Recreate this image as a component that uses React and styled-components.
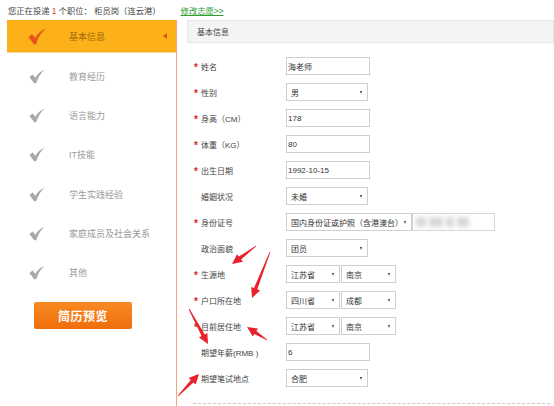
import React from "react";
import styled, { createGlobalStyle } from "styled-components";

const GlobalStyle = createGlobalStyle`
  html, body {
    margin: 0;
    padding: 0;
    background: #fff;
  }
  body {
    font-family: "Liberation Sans", "Noto Sans CJK SC", sans-serif;
    color: #333;
  }
`;

const navItems = [
  "教育经历",
  "语言能力",
  "IT技能",
  "学生实践经验",
  "家庭成员及社会关系",
  "其他",
];

const rows = [
  { label: "姓名", req: true, kind: "input", value: "海老师" },
  { label: "性别", req: true, kind: "select", value: "男" },
  { label: "身高（CM）", req: true, kind: "input", value: "178" },
  { label: "体重（KG）", req: true, kind: "input", value: "80" },
  { label: "出生日期", req: true, kind: "input", value: "1992-10-15" },
  { label: "婚姻状况", req: false, kind: "select", value: "未婚" },
  { label: "身份证号", req: true, kind: "id" },
  { label: "政治面貌", req: false, kind: "select", value: "团员" },
  { label: "生源地", req: true, kind: "region", value: ["江苏省", "南京"] },
  { label: "户口所在地", req: true, kind: "region", value: ["四川省", "成都"] },
  { label: "目前居住地", req: true, kind: "region", value: ["江苏省", "南京"] },
  { label: "期望年薪(RMB )", req: false, kind: "input", value: "6" },
  { label: "期望笔试地点", req: true, kind: "select", value: "合肥" },
];

const arrows = [
  [256, 246, 232, 264],
  [270, 252, 252, 298],
  [189, 309, 208, 344],
  [267, 340, 247, 327],
  [178, 396, 199, 374],
];

function arrowPoints([x1, y1, x2, y2]) {
  const len = Math.hypot(x2 - x1, y2 - y1);
  const dx = (x2 - x1) / len;
  const dy = (y2 - y1) / len;
  const nx = -dy;
  const ny = dx;
  const bx = x2 - dx * 10;
  const by = y2 - dy * 10;
  const p = (x, y, w) => `${(x + nx * w).toFixed(1)},${(y + ny * w).toFixed(1)}`;
  return [
    p(x1, y1, 0.4),
    p(bx, by, 1.8),
    p(bx, by, 4.8),
    `${x2},${y2}`,
    p(bx, by, -4.8),
    p(bx, by, -1.8),
    p(x1, y1, -0.4),
  ].join(" ");
}

function Check({ active }) {
  return (
    <CheckIcon viewBox="0 0 20 18" $active={active}>
      <path d="M0.5 9.5 L4.5 6.5 L8 10.5 C10.5 6 14 2.5 19.5 0.5 C15 4.5 11.5 9.5 9 17.5 L6.5 17.5 Z" />
    </CheckIcon>
  );
}

function Field({ row }) {
  if (row.kind === "input") return <TextBox>{row.value}</TextBox>;
  if (row.kind === "select") return <SelectBox $w={82}>{row.value}</SelectBox>;
  if (row.kind === "region")
    return (
      <Pair>
        <SelectBox $w={54}>{row.value[0]}</SelectBox>
        <SelectBox $w={55}>{row.value[1]}</SelectBox>
      </Pair>
    );
  return (
    <Pair $gap={0}>
      <SelectBox $w={126}>国内身份证或护照（含港澳台）</SelectBox>
      <Blurred>
        <Blob $w={10} />
        <Blob $w={14} />
        <Blob $w={8} />
        <Blob $w={12} />
      </Blurred>
    </Pair>
  );
}

export default function App() {
  return (
    <Page>
      <GlobalStyle />
      <TopLine>
        <span>
          您正在投递 <em>1</em> 个职位： 柜员岗（连云港）
        </span>
        <EditLink>修改志愿&gt;&gt;</EditLink>
      </TopLine>
      <Body>
        <Sidebar>
          <ActiveTab>
            <Check active />
            <TabText>基本信息</TabText>
            <Pointer />
          </ActiveTab>
          <NavList>
            {navItems.map((t) => (
              <NavItem key={t}>
                <Check />
                <NavText>{t}</NavText>
              </NavItem>
            ))}
          </NavList>
          <PreviewButton>简历预览</PreviewButton>
        </Sidebar>
        <Panel>
          <PanelHead>基本信息</PanelHead>
          <Form>
            {rows.map((r) => (
              <Row key={r.label}>
                <Label>
                  <Star>{r.req ? "*" : ""}</Star>
                  {r.label}
                </Label>
                <Field row={r} />
              </Row>
            ))}
          </Form>
          <Dashed />
        </Panel>
      </Body>
      <Overlay width="554" height="406">
        {arrows.map((a, i) => (
          <polygon key={i} points={arrowPoints(a)} fill="#e8232b" />
        ))}
      </Overlay>
    </Page>
  );
}

const Page = styled.div`
  position: relative;
  width: 554px;
  height: 406px;
  overflow: hidden;
`;

const TopLine = styled.div`
  height: 20px;
  padding-left: 8px;
  display: flex;
  align-items: center;
  font-size: 8.3px;
  color: #444;

  em {
    font-style: normal;
    color: #e03a2a;
  }
`;

const EditLink = styled.a`
  margin-left: 20px;
  color: #2f9e2f;
  text-decoration: underline;
`;

const Body = styled.div`
  display: flex;
  align-items: flex-start;
  padding-left: 7px;
`;

const Sidebar = styled.div`
  width: 169px;
  height: 386px;
  border-right: 1px solid #f0a67e;
  display: flex;
  flex-direction: column;
`;

const ActiveTab = styled.div`
  height: 32px;
  background: #fbb117;
  border-bottom: 1px solid #fcd49a;
  display: flex;
  align-items: center;
  padding-left: 21px;
  position: relative;
`;

const CheckIcon = styled.svg`
  width: ${(p) => (p.$active ? 18 : 16)}px;
  height: ${(p) => (p.$active ? 17 : 15)}px;
  fill: ${(p) => (p.$active ? "#e8541d" : "#a9a9a9")};
  flex-shrink: 0;
`;

const TabText = styled.span`
  margin-left: 23px;
  font-size: 9px;
  color: #9c6a0c;
`;

const Pointer = styled.span`
  position: absolute;
  right: 9px;
  top: 13px;
  border-top: 3.5px solid transparent;
  border-bottom: 3.5px solid transparent;
  border-right: 4px solid #d8570f;
`;

const NavList = styled.div`
  padding-top: 4px;
  display: flex;
  flex-direction: column;
`;

const NavItem = styled.div`
  height: 39.2px;
  display: flex;
  align-items: center;
  padding-left: 22px;
`;

const NavText = styled.span`
  margin-left: 24px;
  font-size: 9px;
  color: #9a9a9a;
`;

const PreviewButton = styled.div`
  margin: 10px 0 0 27px;
  width: 98px;
  height: 27px;
  background: linear-gradient(#f98a22, #ef6e0c);
  border-radius: 2px;
  color: #fff;
  font-size: 12px;
  font-weight: bold;
  display: flex;
  align-items: center;
  justify-content: center;
  letter-spacing: 0.5px;
`;

const Panel = styled.div`
  flex: 1;
  margin-left: 10px;
`;

const PanelHead = styled.div`
  height: 21px;
  border: 1px solid #e6e6e6;
  background: #f4f4f4;
  font-size: 8px;
  color: #444;
  display: flex;
  align-items: center;
  padding-left: 9px;
`;

const Form = styled.div`
  padding: 10px 0 0 7px;
`;

const Row = styled.div`
  height: 26px;
  display: flex;
  align-items: center;
`;

const Label = styled.div`
  width: 92px;
  display: flex;
  align-items: center;
  font-size: 8px;
  color: #444;
`;

const Star = styled.span`
  width: 7px;
  color: #d9262b;
  font-size: 10px;
  font-weight: bold;
  line-height: 8px;
  padding-top: 3px;
`;

const TextBox = styled.div`
  width: 81px;
  height: 16px;
  border: 1px solid #cfcfcf;
  font-size: 8px;
  color: #333;
  display: flex;
  align-items: center;
  padding-left: 1px;
  box-sizing: content-box;
`;

const SelectBox = styled.div`
  width: ${(p) => p.$w}px;
  height: 18px;
  box-sizing: border-box;
  border: 1px solid #cfcfcf;
  font-size: 8px;
  color: #333;
  display: flex;
  align-items: center;
  padding-left: 4px;
  position: relative;
  white-space: nowrap;

  &::after {
    content: "";
    position: absolute;
    right: 5px;
    top: 7px;
    border-left: 1.5px solid transparent;
    border-right: 1.5px solid transparent;
    border-top: 3px solid #333;
  }
`;

const Pair = styled.div`
  display: flex;
  gap: ${(p) => (p.$gap ?? 1)}px;
`;

const Blurred = styled.div`
  width: 83px;
  height: 18px;
  box-sizing: border-box;
  border: 1px solid #d6d6d6;
  display: flex;
  align-items: center;
  gap: 3px;
  padding-left: 3px;
  overflow: hidden;
`;

const Blob = styled.span`
  width: ${(p) => p.$w}px;
  height: 10px;
  background: #d8d8d8;
  filter: blur(2px);
`;

const Dashed = styled.div`
  margin: 12px 4px 0 6px;
  border-top: 1px dashed #c8c8c8;
`;

const Overlay = styled.svg`
  position: absolute;
  left: 0;
  top: 0;
  pointer-events: none;
`;
